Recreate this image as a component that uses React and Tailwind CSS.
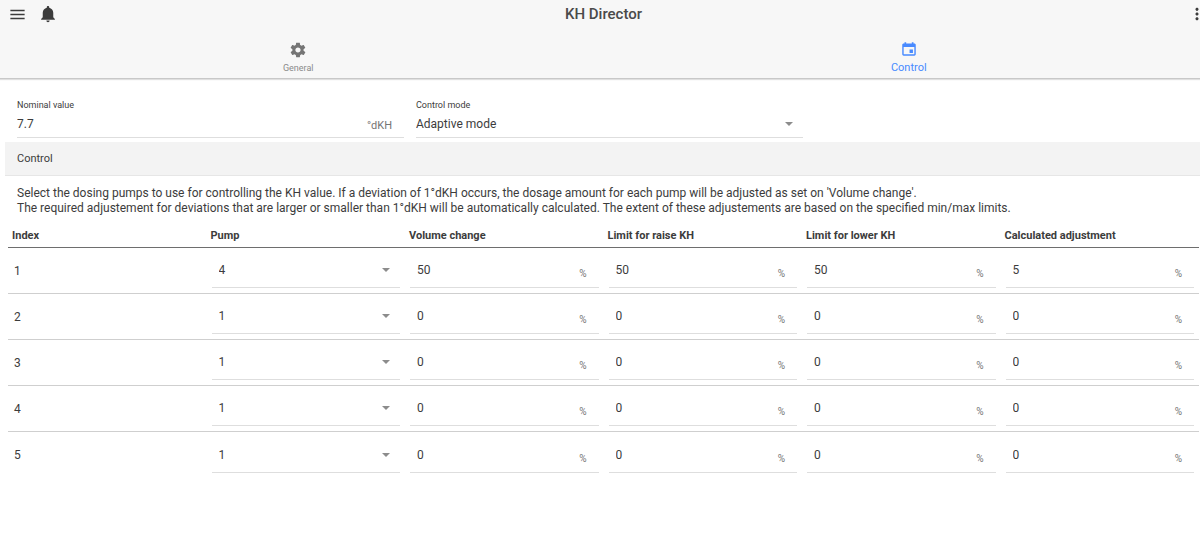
import { IoMdMenu, IoMdNotifications, IoMdMore, IoMdSettings, IoMdCalendar } from "react-icons/io";

const columns = [
  "Index",
  "Pump",
  "Volume change",
  "Limit for raise KH",
  "Limit for lower KH",
  "Calculated adjustment",
];

const rows = [
  { index: 1, pump: "4", values: ["50", "50", "50", "5"] },
  { index: 2, pump: "1", values: ["0", "0", "0", "0"] },
  { index: 3, pump: "1", values: ["0", "0", "0", "0"] },
  { index: 4, pump: "1", values: ["0", "0", "0", "0"] },
  { index: 5, pump: "1", values: ["0", "0", "0", "0"] },
];

function Select({ options, className = "", ...props }) {
  return (
    <div className="relative">
      <select
        className={`block w-full appearance-none bg-transparent pr-6 text-[12px] leading-5 outline-none ${className}`}
        {...props}
      >
        {options.map((option) => (
          <option key={option}>{option}</option>
        ))}
      </select>
      <svg
        viewBox="0 0 8 4"
        className="pointer-events-none absolute top-2 right-[10px] h-1 w-2 fill-[#8c8c8c]"
        aria-hidden="true"
      >
        <path d="M0 0h8L4 4z" />
      </svg>
    </div>
  );
}

function Header() {
  return (
    <header className="overflow-hidden border-b border-[#c8c8c8] bg-[#f7f7f7] shadow-[0_1px_1px_rgba(0,0,0,0.12)]">
      <div className="-mr-[7px] grid h-7 grid-cols-[1fr_auto_1fr] items-center">
        <div className="flex items-center gap-[11px] pl-2">
          <button aria-label="Menu">
            <IoMdMenu className="size-[19px]" />
          </button>
          <button aria-label="Notifications">
            <IoMdNotifications className="size-5" />
          </button>
        </div>
        <h1 className="text-[15px] leading-5 font-medium text-[#4a4a4a]">KH Director</h1>
        <button aria-label="More" className="justify-self-end">
          <IoMdMore className="size-5" />
        </button>
      </div>
      <nav className="-mr-[14px] -ml-[7px] grid h-[50px] grid-cols-2">
        <a href="#general" className="flex flex-col items-center gap-[3px] pt-[13px] text-[#757575]">
          <IoMdSettings className="size-[18px]" />
          <span className="text-[9px] leading-3 text-[#8a8a8a]">General</span>
        </a>
        <a href="#control" aria-current="page" className="flex flex-col items-center gap-1 pt-3 text-[#488aff]">
          <IoMdCalendar className="size-[18px]" />
          <span className="text-[11px] leading-3">Control</span>
        </a>
      </nav>
    </header>
  );
}

export default function App() {
  return (
    <div className="min-h-screen overflow-x-hidden bg-white font-[Roboto,sans-serif] text-[#3c3c3c]">
      <Header />
      <main>
        <form className="-mr-0.5 grid grid-cols-3 gap-3 pt-5 pl-[17px]">
          <div className="border-b border-[#dedede] pb-[3px]">
            <label htmlFor="nominal" className="block text-[9px] leading-3">
              Nominal value
            </label>
            <div className="flex items-end pt-[3px] pr-3">
              <input
                id="nominal"
                defaultValue="7.7"
                inputMode="decimal"
                className="min-w-0 flex-1 text-[12px] leading-5 outline-none"
              />
              <span className="text-[11px] leading-4 text-[#757575]">°dKH</span>
            </div>
          </div>
          <div className="border-b border-[#dedede] pb-[3px]">
            <label htmlFor="mode" className="block text-[9px] leading-3">
              Control mode
            </label>
            <div className="pt-[3px]">
              <Select id="mode" defaultValue="Adaptive mode" options={["Adaptive mode", "Manual mode"]} />
            </div>
          </div>
        </form>

        <h2 className="mt-1 ml-[5px] border-b border-[#e6e6e6] bg-[#f3f3f3] py-2 pl-3 text-[11px] leading-[17px]">
          Control
        </h2>

        <p className="pt-[10px] pl-[17px] text-[12px] leading-[15px]">
          Select the dosing pumps to use for controlling the KH value. If a deviation of 1°dKH occurs, the dosage amount
          for each pump will be adjusted as set on 'Volume change'.
          <br />
          The required adjustement for deviations that are larger or smaller than 1°dKH will be automatically
          calculated. The extent of these adjustements are based on the specified min/max limits.
        </p>

        <div className="mt-3 pr-px pl-2">
          <table className="w-full table-fixed border-separate border-spacing-0">
            <thead>
              <tr>
                {columns.map((column) => (
                  <th
                    key={column}
                    scope="col"
                    className="h-5 border-b border-[#6e6e6e] pl-1 text-left align-top text-[11px] leading-4 font-bold"
                  >
                    {column}
                  </th>
                ))}
              </tr>
            </thead>
            <tbody className="[&>tr:not(:last-child)>*]:border-b [&>tr>*]:border-[#cfcfcf]">
              {rows.map((row) => (
                <tr key={row.index} className="h-[46px]">
                  <td className="pl-[6px] text-[12px] leading-5">{row.index}</td>
                  <td className="px-[5px] align-bottom">
                    <div className="mb-[5px] border-b border-[#dedede] pb-[7px]">
                      <Select
                        aria-label={`Pump ${row.index}`}
                        defaultValue={row.pump}
                        options={["1", "2", "3", "4"]}
                        className="pl-[7px]"
                      />
                    </div>
                  </td>
                  {row.values.map((value, i) => (
                    <td key={i} className="px-[5px] align-bottom">
                      <div className="mb-[5px] flex items-end border-b border-[#dedede] pr-3 pb-[7px] pl-[7px]">
                        <input
                          aria-label={`${columns[i + 2]} ${row.index}`}
                          defaultValue={value}
                          inputMode="decimal"
                          className="min-w-0 flex-1 text-[12px] leading-5 outline-none"
                        />
                        <span className="text-[10px] leading-3 text-[#757575]">%</span>
                      </div>
                    </td>
                  ))}
                </tr>
              ))}
            </tbody>
          </table>
        </div>
      </main>
    </div>
  );
}
